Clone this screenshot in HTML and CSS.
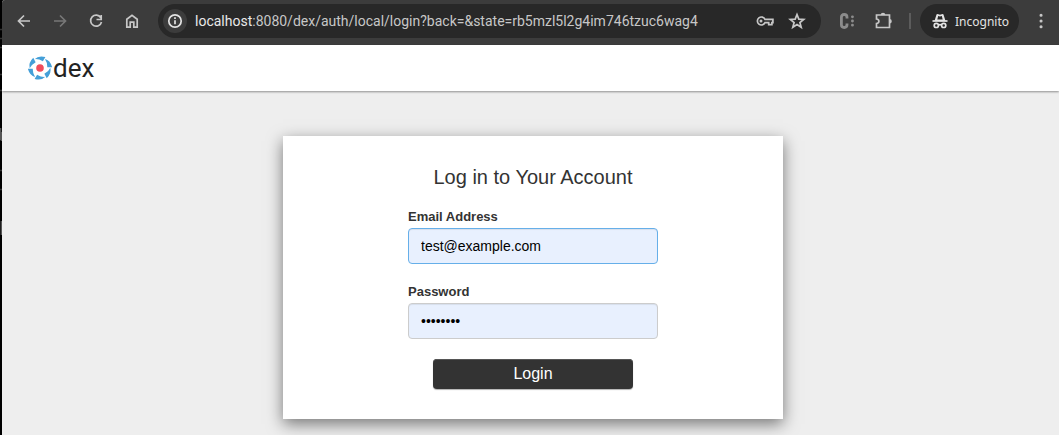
FILE: index.html
```
<!DOCTYPE html>
<html lang="en">
<head>
<meta charset="utf-8">
<meta name="viewport" content="width=device-width, initial-scale=1">
<title>dex</title>
<link rel="stylesheet" href="styles.css">
</head>
<body>
<div class="backdrop" aria-hidden="true">
  <svg width="2" height="435" viewBox="0 0 2 435" stroke="#777"><path d="M0 29.500H2M0 38.500H2M0 47.500H2M0 74.500H2M0 90.500H2M0 170.500H2M0 189.500H2"/><path d="M.5 128v12M1.500 132v9M1.500 221v14" stroke="#555"/></svg>
</div>
<div class="window">
  <div class="toolbar">
    <button class="icon-button" aria-label="Back"><svg viewBox="0 0 20 20"><path d="M16 10H4.500M10 4.500 4.500 10l5.500 5.500"/></svg></button>
    <button class="icon-button dim" aria-label="Forward"><svg viewBox="0 0 20 20"><path d="M4 10h11.500M10 4.500l5.500 5.500-5.500 5.500"/></svg></button>
    <button class="icon-button" aria-label="Reload"><svg viewBox="0 0 20 20"><path d="M14.800 6.700A5.500 5.500 0 1 0 15.500 11M15.200 4v4.500h-4.700"/></svg></button>
    <button class="icon-button" aria-label="Home"><svg viewBox="0 0 20 20"><path d="M4.800 8.200 10 4.300l5.200 3.900v8h-3.400v-5H8.200v5H4.800Z"/></svg></button>
    <div class="address">
      <button class="site-info" aria-label="Site information"><svg viewBox="0 0 20 20"><circle cx="10" cy="10" r="6.200"/><path d="M10 9.200v4M10 6.200v1.700"/></svg></button>
      <div class="url"><span class="host">localhost</span>:8080/dex/auth/local/login?back=&amp;state=rb5mzl5l2g4im746tzuc6wag4</div>
      <button class="icon-button" aria-label="Passwords"><svg viewBox="0 0 20 20"><path d="M10 8.300h7.900v3.400h-1v1.900h-3.200v-1.900H10a4 4 0 1 1 0-3.400Z"/><circle class="solid" cx="6" cy="10" r="1.500"/></svg></button>
      <button class="icon-button" aria-label="Bookmark"><svg viewBox="0 0 20 20"><path d="m10 3.500 1.800 4.600 4.900.3-3.800 3.100 1.300 4.800-4.200-2.700-4.200 2.700 1.300-4.800-3.800-3.100 4.900-.3Z"/></svg></button>
    </div>
    <button class="icon-button extension" aria-label="Extension"><svg viewBox="0 0 20 20"><path class="heavy" d="M10 7.500V6.200Q10 3.500 7.200 3.500T4.400 6.200v7.600q0 2.700 2.800 2.700t2.800-2.700v-1.300"/><path class="small-dots" d="M15.400 5.800h.1M15.400 10h.1M15.400 14.200h.1"/></svg></button>
    <button class="icon-button" aria-label="Extensions"><svg viewBox="0 0 20 20"><path d="M3.500 4h13v12.500h-13v-4q2.400-.4 2.400-2.300T3.500 8Z"/><path class="solid" d="M7.700 4a2.300 2.300 0 0 1 4.600 0ZM16.500 8a2.300 2.300 0 0 1 0 4.600Z"/></svg></button>
    <span class="separator"></span>
    <button class="incognito"><svg viewBox="0 0 20 20"><path d="M2.500 10h15"/><path class="solid" fill-rule="evenodd" d="M4.500 10 6.500 3.600Q6.700 3 7.500 3l2.500.7 2.500-.7q.8 0 1 .6l2 6.400ZM7.300 8.500h5.400l-.9-3.400-1.800.5-1.800-.5Z"/><path d="M8.500 14q1.500-.8 3 0"/><circle cx="6.300" cy="14.400" r="2.100"/><circle cx="13.700" cy="14.400" r="2.100"/></svg>Incognito</button>
    <button class="icon-button" aria-label="Menu"><svg viewBox="0 0 20 20"><path class="dots" d="M10 4.300h.1M10 10h.1M10 15.700h.1"/></svg></button>
  </div>
  <header class="navbar">
    <a class="brand" href="#" aria-label="dex">
      <svg class="mark" viewBox="0 0 24 24"><g fill="#449fd8"><path id="blade" d="M6.600 3.200Q10.500-.8 17.400 1.100L14.900 5.300Q10.500 2.700 6.600 3.200Z"/><use href="#blade" transform="rotate(60 12 12)"/><use href="#blade" transform="rotate(120 12 12)"/><use href="#blade" transform="rotate(180 12 12)"/><use href="#blade" transform="rotate(240 12 12)"/><use href="#blade" transform="rotate(300 12 12)"/></g><circle cx="12" cy="12" r="3.800" fill="#f04d5c"/></svg>
      <span class="wordmark">dex</span>
    </a>
  </header>
  <main class="content">
    <form class="panel">
      <h1 class="heading">Log in to Your Account</h1>
      <div class="row">
        <label class="label" for="login">Email Address</label>
        <input class="input active" id="login" type="text" value="test@example.com">
      </div>
      <div class="row">
        <label class="label" for="password">Password</label>
        <input class="input" id="password" type="password" value="password">
      </div>
      <button class="submit" type="button">Login</button>
    </form>
  </main>
</div>
</body>
</html>
```
FILE: styles.css
```
* { box-sizing: border-box; }
body {
  margin: 0;
  min-height: 100vh;
  display: flex;
  overflow: hidden;
  background: #000;
  color: #333;
  font-family: "Liberation Sans", Arial, sans-serif;
}
.backdrop { width: 2px; flex: none; }
.backdrop svg { display: block; }
.window {
  flex: 1;
  min-width: 0;
  display: flex;
  flex-direction: column;
  background: #eee;
  border-top-left-radius: 3px;
  overflow: hidden;
}
button { border: 0; padding: 0; background: none; font: inherit; }
svg { fill: none; stroke: currentColor; stroke-width: 1.700; }

.toolbar {
  display: flex;
  align-items: center;
  gap: 16px;
  padding: 4px 8px 7px 12px;
  background: #3c3c3c;
  color: #c7c7c7;
  font-family: "Noto Sans", "Open Sans", sans-serif;
}
.icon-button { flex: none; width: 20px; height: 20px; color: #c7c7c7; }
.icon-button svg { display: block; width: 20px; height: 20px; }
.icon-button.dim { color: #777; }
.icon-button.extension { color: #8c8c8c; }
.dots { stroke-width: 3; stroke-linecap: round; }
.small-dots { stroke-width: 2.800; stroke-linecap: round; }
.heavy { stroke-width: 2.800; }
.solid { fill: currentColor; stroke: none; }
.address {
  flex: 1;
  min-width: 0;
  display: flex;
  align-items: center;
  gap: 12px;
  height: 34px;
  padding: 0 14px 0 5px;
  border-radius: 17px;
  background: #282828;
}
.site-info {
  flex: none;
  display: grid;
  place-items: center;
  width: 24px;
  height: 24px;
  border-radius: 50%;
  background: #3c3c3c;
  color: #e3e3e3;
}
.site-info svg { width: 20px; height: 20px; }
.url {
  flex: 1;
  min-width: 0;
  overflow: hidden;
  white-space: nowrap;
  font-family: Roboto, "Noto Sans", sans-serif;
  font-size: 14px;
  line-height: 20px;
  margin-left: -4px;
}
.host { color: #e8e8e8; }
.separator { width: 2px; height: 16px; background: #5c5c5c; }
.incognito {
  display: flex;
  align-items: center;
  gap: 5px;
  height: 34px;
  margin: 0 -4px 0 -7px;
  padding: 0 10px;
  border-radius: 17px;
  background: #282828;
  color: #e3e3e3;
  font-size: 12px;
}
.incognito svg { width: 20px; height: 20px; }

.navbar {
  display: flex;
  align-items: center;
  height: 46px;
  padding: 0 26px;
  background: #fff;
  box-shadow: 0 1px 2px rgba(0, 0, 0, .4);
}
.brand { display: flex; align-items: center; gap: 1px; color: #222; text-decoration: none; }
.mark { width: 24px; height: 24px; stroke: none; }
.wordmark {
  font-family: Roboto, "Open Sans", sans-serif;
  font-size: 26px;
  line-height: 46px;
}

.content { flex: 1; padding: 45px 0 16px 5px; }
.panel {
  width: 100%;
  max-width: 500px;
  margin: 0 auto;
  padding: 30px;
  display: flex;
  flex-direction: column;
  align-items: center;
  background: #fff;
  box-shadow: 0 5px 15px rgba(0, 0, 0, .5);
}
.heading { margin: 0 0 21px; font-size: 20px; line-height: 22px; font-weight: 400; }
.row { width: 100%; max-width: 250px; margin-bottom: 20px; }
.label { display: block; margin-bottom: 4px; font-size: 13px; line-height: 15px; font-weight: 700; }
.input {
  display: block;
  width: 100%;
  height: 36px;
  padding: 6px 12px;
  border: 1px solid #ccc;
  border-radius: 4px;
  background: #e8f0fe;
  box-shadow: inset 0 1px 1px rgba(0, 0, 0, .075);
  color: #000;
  font: 14px "Liberation Sans", Arial, sans-serif;
  outline: none;
}
.active { border-color: #66afe9; }
.submit {
  width: 100%;
  max-width: 200px;
  height: 30px;
  border-radius: 4px;
  background: #333;
  box-shadow: inset 0 1px 0 #555, 0 1px 1px rgba(0, 0, 0, .3);
  color: #fff;
  font-size: 16px;
}
```
